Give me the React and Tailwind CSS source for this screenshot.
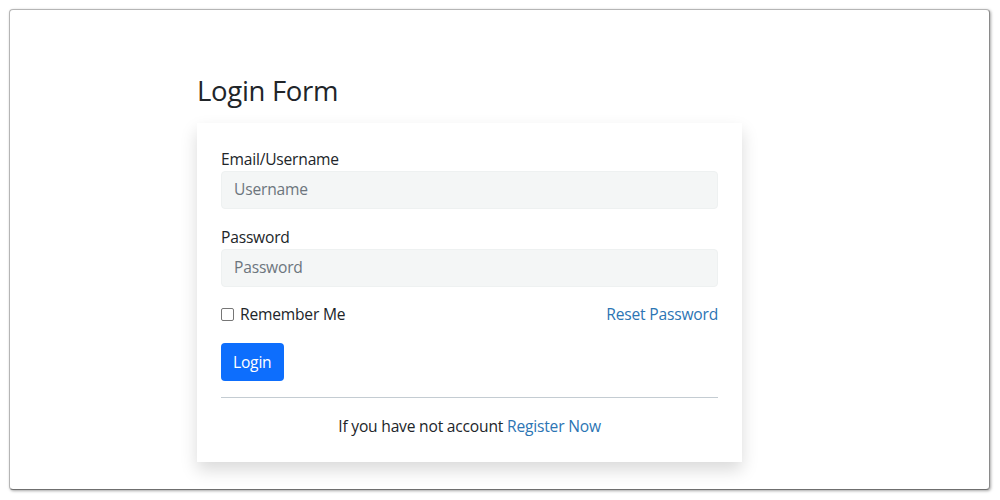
export default function App() {
  return (
    <div className="w-[1000px] h-[500px] bg-white pt-[9px] pl-[9px]" style={{ fontFamily: '"Open Sans", "Noto Sans", sans-serif' }}>
      <div className="w-[981px] h-[481px] rounded-[4px] border border-[#b5b5b5] border-r-[#8a8a8a] border-b-[#6f6f6f] shadow-[1px_1px_3px_rgba(0,0,0,0.35)] bg-white pl-[187px] pt-[64px]">
        <h2 className="text-[27.5px] leading-[1.2] text-[#212529] mb-[16px] tracking-[-0.3px]">Login Form</h2>
        <div className="w-[545px] bg-white shadow-[0_8px_16px_rgba(0,0,0,0.15)] px-6 pt-[24px] pb-[24px] text-[15.6px] text-[#212529] tracking-[-0.2px]">
          <label className="block leading-[24px]">Email/Username</label>
          <div className="h-[38px] rounded-[4px] bg-[#f4f6f6] border border-[#eef1f1] px-3 flex items-center text-[#6c757d]">Username</div>
          <label className="block leading-[24px] mt-[16px]">Password</label>
          <div className="h-[38px] rounded-[4px] bg-[#f4f6f6] border border-[#eef1f1] px-3 flex items-center text-[#6c757d]">Password</div>
          <div className="flex items-center justify-between mt-[16px] h-[24px]">
            <div className="flex items-center gap-[6px]">
              <span className="w-[13px] h-[13px] border border-[#767676] rounded-[2px] bg-white" />
              <span>Remember Me</span>
            </div>
            <span className="text-[#2c75b4]">Reset Password</span>
          </div>
          <div className="mt-[16px]">
            <button className="h-[38px] px-3 rounded-[4px] bg-[#0d6efd] text-white leading-[24px]">Login</button>
          </div>
          <div className="h-px bg-[#c4ccd2] mt-[16px]" />
          <p className="text-center mt-[16px] leading-[24px]">
            If you have not account <span className="text-[#2c75b4]">Register Now</span>
          </p>
        </div>
      </div>
    </div>
  )
}
